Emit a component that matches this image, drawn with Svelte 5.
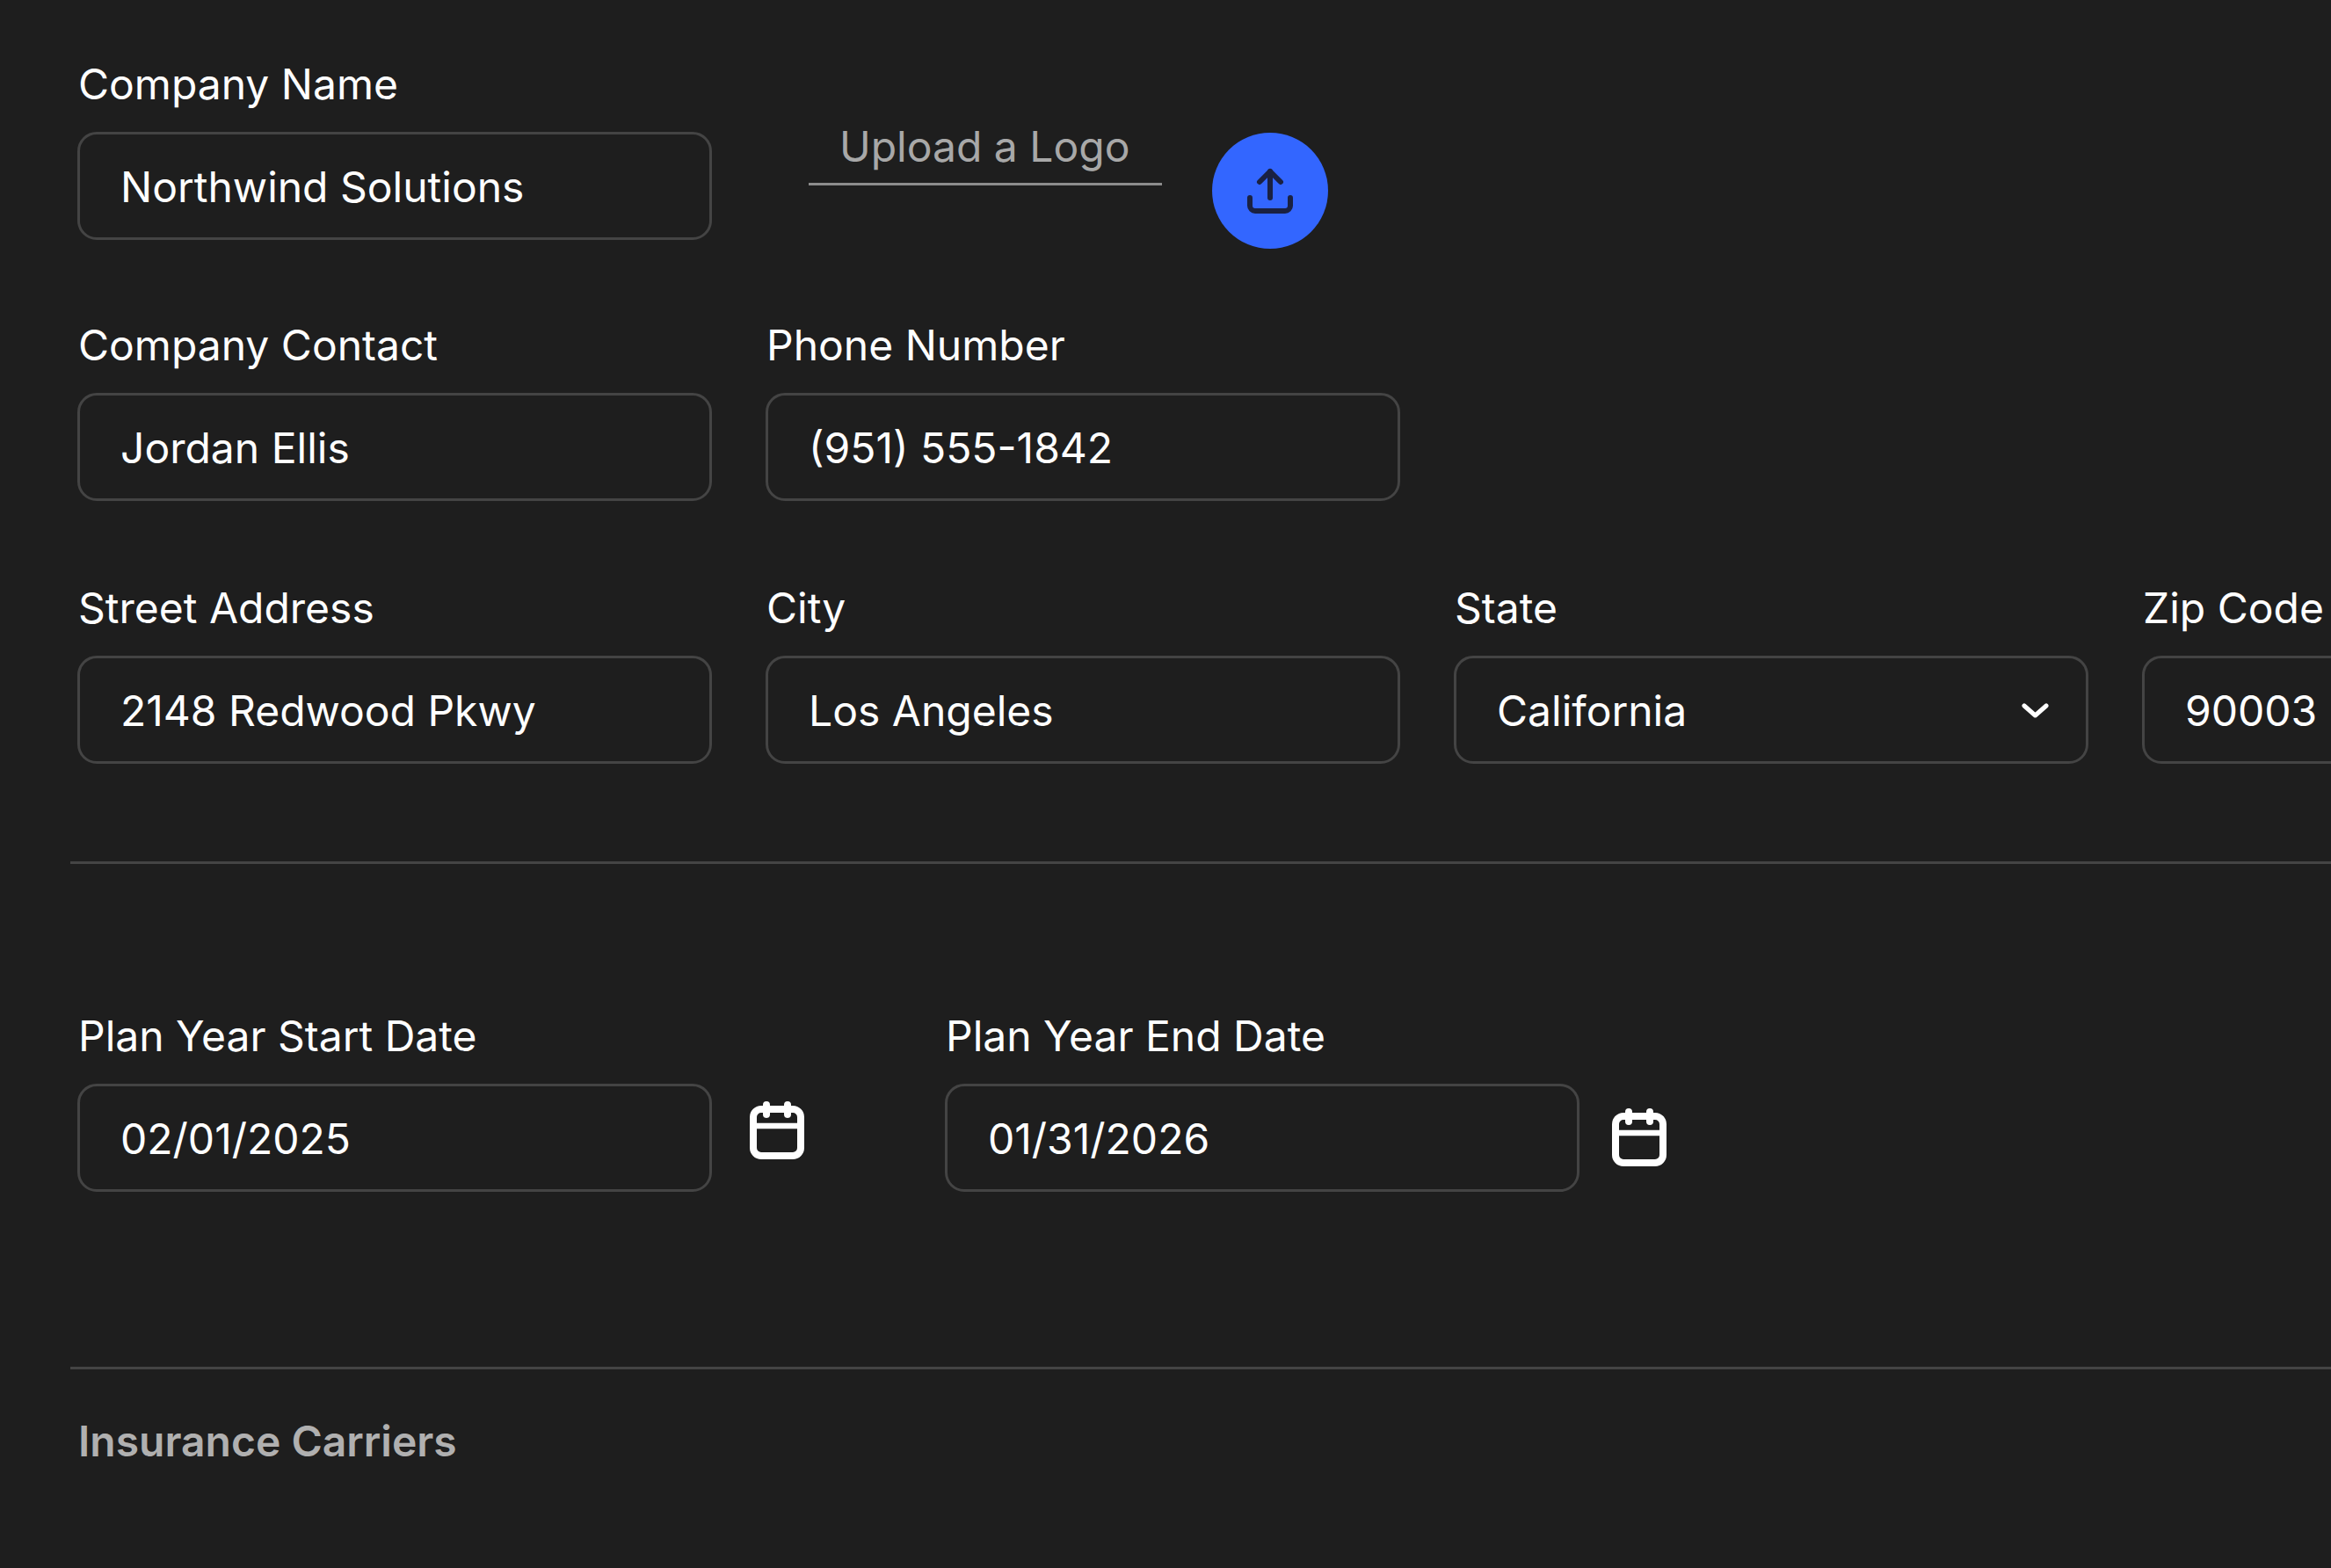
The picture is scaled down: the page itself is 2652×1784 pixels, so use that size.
<script>
	// Company settings form - static values only
	let company = 'Northwind Solutions';
</script>

<main class="page">
	<section class="row first">
		<div class="field">
			<label for="company">Company Name</label>
			<input id="company" readonly value={company} />
		</div>
		<div class="upload">
			<span class="upload-text">Upload a Logo</span>
		</div>
		<button class="upload-btn" type="button" aria-label="Upload a logo">
			<svg width="60" height="60" viewBox="0 0 60 60" fill="none" stroke="#1a2142" stroke-width="6" stroke-linecap="round" stroke-linejoin="round">
				<path d="M30 38V8" />
				<path d="M18 20L30 8L42 20" />
				<path d="M7 38v9a6 6 0 0 0 6 6h34a6 6 0 0 0 6-6v-9" />
			</svg>
		</button>
	</section>

	<section class="row second">
		<div class="field">
			<label for="contact">Company Contact</label>
			<input id="contact" readonly value="Jordan Ellis" />
		</div>
		<div class="field">
			<label for="phone">Phone Number</label>
			<input id="phone" readonly value="(951) 555-1842" />
		</div>
	</section>

	<section class="row third">
		<div class="field">
			<label for="street">Street Address</label>
			<input id="street" readonly value="2148 Redwood Pkwy" />
		</div>
		<div class="field">
			<label for="city">City</label>
			<input id="city" readonly value="Los Angeles" />
		</div>
		<div class="field">
			<span class="label">State</span>
			<div class="select">
				<span>California</span>
				<svg width="31" height="17" viewBox="0 0 31 17" fill="none" stroke="#fff" stroke-width="5" stroke-linecap="round" stroke-linejoin="round">
					<path d="M3 3L15.5 14L28 3" />
				</svg>
			</div>
		</div>
		<div class="field">
			<label for="zip">Zip Code</label>
			<input id="zip" readonly value="90003" />
		</div>
	</section>

	<hr class="rule top-rule" />

	<section class="dates">
		<div class="field">
			<label for="start">Plan Year Start Date</label>
			<input id="start" readonly value="02/01/2025" />
		</div>
		<svg class="cal cal-start" width="62" height="66" viewBox="0 0 62 66" fill="none" stroke="#fff" stroke-width="8" stroke-linecap="round">
			<rect x="4" y="9" width="54" height="53" rx="9" />
			<path d="M4 28H58" stroke-width="6.5" />
			<path d="M19 4V15M43 4V15" />
		</svg>
		<div class="field end">
			<label for="end">Plan Year End Date</label>
			<input id="end" readonly value="01/31/2026" />
		</div>
		<svg class="cal cal-end" width="62" height="66" viewBox="0 0 62 66" fill="none" stroke="#fff" stroke-width="8" stroke-linecap="round">
			<rect x="4" y="9" width="54" height="53" rx="9" />
			<path d="M4 28H58" stroke-width="6.5" />
			<path d="M19 4V15M43 4V15" />
		</svg>
	</section>

	<hr class="rule bottom-rule" />

	<h2>Insurance Carriers</h2>
</main>

<style>
	:global(body) {
		background: #1e1e1e;
	}

	.page {
		width: 2652px;
		height: 1784px;
		overflow: hidden;
		box-sizing: border-box;
		padding: 67px 0 0 88px;
		background: #1e1e1e;
		color: #fff;
		font-family: Inter, 'Liberation Sans', sans-serif;
		font-size: 48px;
	}

	.row {
		display: flex;
		gap: 61px;
		width: max-content;
	}

	.second {
		margin-top: 81px;
	}

	.third {
		margin-top: 93px;
	}

	.field {
		width: 722px;
		flex: none;
		display: flex;
		flex-direction: column;
	}

	label, .label {
		display: block;
		height: 58px;
		line-height: 58px;
		margin-bottom: 25px;
		padding-left: 1px;
		white-space: nowrap;
	}

	input, .select {
		box-sizing: border-box;
		width: 722px;
		height: 123px;
		padding: 2px 42px 0 46px;
		background: transparent;
		border: 3px solid #444;
		border-radius: 22px;
		color: #fff;
		font: inherit;
		outline: none;
	}

	.select {
		display: flex;
		align-items: center;
		justify-content: space-between;
	}

	.upload {
		width: 402px;
		height: 73px;
		margin: 71px 0 0 49px;
		padding-left: 35px;
		box-sizing: border-box;
		border-bottom: 3px solid #8c8c8c;
		color: #a8a8a8;
		white-space: nowrap;
		line-height: 58px;
	}

	.upload-btn {
		width: 132px;
		height: 132px;
		margin: 84px 0 0 -4px;
		padding: 0;
		flex: none;
		display: flex;
		align-items: center;
		justify-content: center;
		background: #3366ff;
		border: none;
		border-radius: 50%;
	}

	.rule {
		margin: 0 0 0 -8px;
		width: 2572px;
		height: 3px;
		border: none;
		background: #444;
	}

	.top-rule {
		margin-top: 111px;
	}

	.dates {
		display: flex;
		align-items: flex-end;
		margin-top: 167px;
	}

	.cal {
		flex: none;
	}

	.cal-start {
		margin: 0 0 37px 43px;
	}

	.end {
		margin-left: 160px;
	}

	.cal-end {
		margin: 0 0 29px 37px;
	}

	.bottom-rule {
		margin-top: 199px;
	}

	h2 {
		margin: 53px 0 0;
		padding-left: 1px;
		height: 58px;
		line-height: 58px;
		font-size: 48px;
		font-weight: 600;
		color: #b0b0b0;
	}
</style>
